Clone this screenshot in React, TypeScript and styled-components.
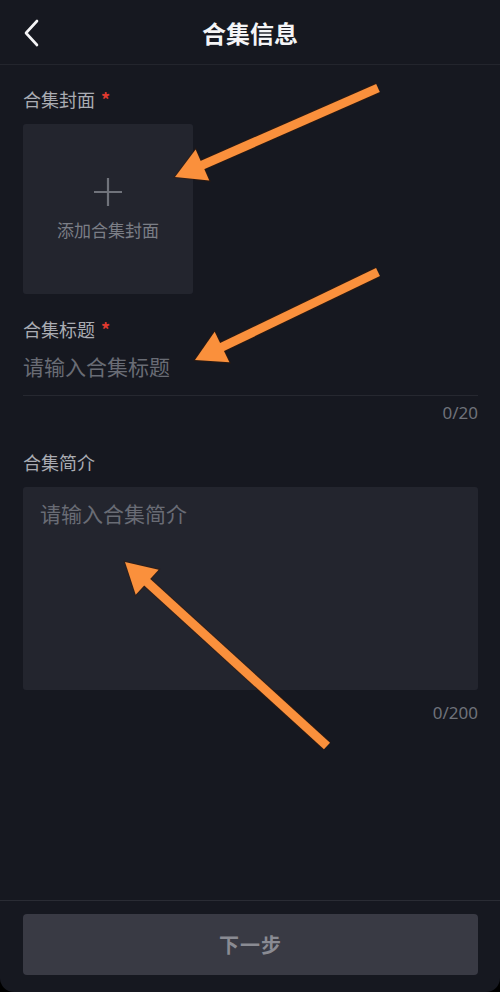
import React from 'react';
import styled, { createGlobalStyle } from 'styled-components';

const GlobalStyle = createGlobalStyle`
    html, body {
        margin: 0;
        padding: 0;
        background: #000;
    }
    body {
        font-family: "Noto Sans CJK SC", "Noto Sans", sans-serif;
    }
`;

const Screen = styled.div`
    position: relative;
    width: 500px;
    height: 992px;
    display: flex;
    flex-direction: column;
    background: #161820;
    border-radius: 0 0 14px 14px;
    overflow: hidden;
`;

const Header = styled.div`
    height: 64px;
    display: flex;
    align-items: center;
    justify-content: center;
    position: relative;
    border-bottom: 1px solid #23252d;
    flex-shrink: 0;
`;

const BackButton = styled.div`
    position: absolute;
    left: 22px;
    top: 19px;
    width: 20px;
    height: 28px;
`;

const Title = styled.div`
    font-size: 24px;
    font-weight: 700;
    color: #f4f4f6;
`;

const Content = styled.div`
    flex: 1;
    display: flex;
    flex-direction: column;
    padding: 0 22px 0 23px;
`;

const Label = styled.div<{ $top: number }>`
    margin-top: ${props => props.$top}px;
    font-size: 18px;
    line-height: 24px;
    color: #aaacb3;
    display: flex;
    align-items: center;
`;

const Required = styled.span`
    color: #e0392f;
    font-size: 18px;
    font-weight: 700;
    margin-left: 6px;
    line-height: 24px;
`;

const CoverBox = styled.div`
    margin-top: 13px;
    width: 170px;
    height: 170px;
    border-radius: 3px;
    background: #23252e;
    display: flex;
    flex-direction: column;
    align-items: center;
    justify-content: center;
`;

const CoverText = styled.div`
    margin-top: 11px;
    font-size: 17px;
    line-height: 24px;
    color: #7b7e86;
`;

const InputRow = styled.div`
    margin-top: 11px;
    padding-bottom: 15px;
    border-bottom: 1px solid #262830;
`;

const Placeholder = styled.div`
    font-size: 21px;
    line-height: 28px;
    color: #696c75;
`;

const Counter = styled.div<{ $top: number }>`
    margin-top: ${props => props.$top}px;
    text-align: right;
    font-size: 17px;
    line-height: 22px;
    color: #6f727a;
    font-family: "Noto Sans", "Noto Sans CJK SC", sans-serif;
`;

const TextArea = styled.div`
    margin-top: 13px;
    height: 203px;
    box-sizing: border-box;
    padding: 12px 17px;
    border-radius: 3px;
    background: #23252e;
`;

const Footer = styled.div`
    flex-shrink: 0;
    border-top: 1px solid #2a2c34;
    padding: 13px 22px 17px 23px;
`;

const NextButton = styled.div`
    height: 61px;
    border-radius: 4px;
    background: #393a44;
    display: flex;
    align-items: center;
    justify-content: center;
    font-size: 20px;
    font-weight: 700;
    color: #8a8b93;
    letter-spacing: 1px;
`;

const Overlay = styled.svg`
    position: absolute;
    left: 0;
    top: 0;
    pointer-events: none;
`;

interface ArrowProps {
    tail: [number, number];
    tip: [number, number];
}

const Arrow = ({ tail, tip }: ArrowProps) => {
    const dx = tip[0] - tail[0];
    const dy = tip[1] - tail[1];
    const len = Math.sqrt(dx * dx + dy * dy);
    const ux = dx / len;
    const uy = dy / len;
    const px = -uy;
    const py = ux;
    const headLen = 30;
    const headHalf = 17;
    const bx = tip[0] - ux * headLen;
    const by = tip[1] - uy * headLen;
    const head = [
        `${tip[0]},${tip[1]}`,
        `${bx + px * headHalf},${by + py * headHalf}`,
        `${bx - px * headHalf},${by - py * headHalf}`,
    ].join(' ');
    const endX = bx + ux * 4;
    const endY = by + uy * 4;
    return (
        <g>
            <line
                x1={tail[0]}
                y1={tail[1]}
                x2={endX}
                y2={endY}
                stroke="#3a1a08"
                strokeWidth={11}
                opacity={0.5}
            />
            <polygon points={head} fill="#3a1a08" opacity={0.5} stroke="#3a1a08" strokeWidth={2} />
            <line
                x1={tail[0]}
                y1={tail[1]}
                x2={endX}
                y2={endY}
                stroke="#fa903c"
                strokeWidth={9}
            />
            <polygon points={head} fill="#fa903c" />
        </g>
    );
};

const App = () => {
    return (
        <Screen>
            <GlobalStyle />
            <Header>
                <BackButton>
                    <svg width="20" height="28" viewBox="0 0 20 28">
                        <path
                            d="M15 2 L4 14 L15 26"
                            fill="none"
                            stroke="#f4f4f6"
                            strokeWidth="2.6"
                            strokeLinecap="round"
                            strokeLinejoin="round"
                        />
                    </svg>
                </BackButton>
                <Title>合集信息</Title>
            </Header>
            <Content>
                <Label $top={22}>
                    合集封面<Required>*</Required>
                </Label>
                <CoverBox>
                    <svg width="30" height="30" viewBox="0 0 30 30">
                        <path d="M15 1 V29 M1 15 H29" stroke="#70737b" strokeWidth="2.2" />
                    </svg>
                    <CoverText>添加合集封面</CoverText>
                </CoverBox>
                <Label $top={23}>
                    合集标题<Required>*</Required>
                </Label>
                <InputRow>
                    <Placeholder>请输入合集标题</Placeholder>
                </InputRow>
                <Counter $top={6}>0/20</Counter>
                <Label $top={26}>合集简介</Label>
                <TextArea>
                    <Placeholder>请输入合集简介</Placeholder>
                </TextArea>
                <Counter $top={12}>0/200</Counter>
            </Content>
            <Footer>
                <NextButton>下一步</NextButton>
            </Footer>
            <Overlay width="500" height="992" viewBox="0 0 500 992">
                <Arrow tail={[378, 88]} tip={[175, 177]} />
                <Arrow tail={[378, 272]} tip={[195, 360]} />
                <Arrow tail={[327, 746]} tip={[125, 562]} />
            </Overlay>
        </Screen>
    );
};

export default App;
